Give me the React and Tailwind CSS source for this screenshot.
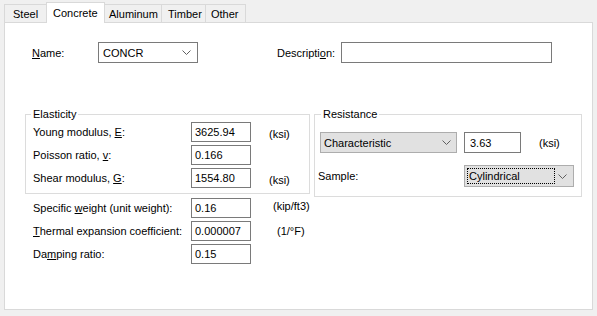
import React from "react";

const Chevron = () => (
  <svg width="9" height="5" viewBox="0 0 9 5" className="shrink-0">
    <path d="M0.5 0.5 L4.5 4.5 L8.5 0.5" fill="none" stroke="#606060" strokeWidth="1" />
  </svg>
);

const Input = ({ value, w = "w-[60px]" }) => (
  <div className={`${w} h-[20px] border border-[#7a7a7a] bg-white flex items-center pl-[3px] shrink-0`}>
    {value}
  </div>
);

const Row = ({ label, value, unit, className = "" }) => (
  <div className={`flex items-center h-[20px] ${className}`}>
    <div className="w-[158px] shrink-0 whitespace-nowrap">{label}</div>
    <Input value={value} />
    {unit}
  </div>
);

export default function App() {
  return (
    <div
      className="w-[597px] h-[316px] bg-[#f0f0f0] text-[11px] text-black leading-[14px] overflow-hidden whitespace-nowrap"
      style={{ fontFamily: '"Liberation Sans", Arial, sans-serif' }}
    >
      {/* tabs */}
      <div className="flex items-end h-[22px] pl-[4px]">
        <div className="h-[18px] w-[43px] border border-b-0 border-[#d9d9d9] flex items-center pl-[8px]">Steel</div>
        <div className="relative z-10 h-[21px] w-[59px] -mb-px border border-b-0 border-[#d9d9d9] bg-white flex items-start pt-[3px] pl-[6px] -ml-px">Concrete</div>
        <div className="h-[18px] w-[57px] border border-b-0 border-l-0 border-[#d9d9d9] flex items-center pl-[4px]">Aluminum</div>
        <div className="h-[18px] w-[44px] border border-b-0 border-l-0 border-[#d9d9d9] flex items-center pl-[6px]">Timber</div>
        <div className="h-[18px] w-[40px] border border-b-0 border-l-0 border-[#d9d9d9] flex items-center pl-[5px]">Other</div>
      </div>
      {/* panel */}
      <div className="ml-[4px] w-[589px] h-[288px] border border-[#d9d9d9] bg-white">
        <div className="flex items-center h-[21px] mt-[19px]">
          <div className="ml-[27px] w-[66px] shrink-0"><u>N</u>ame:</div>
          <div className="w-[100px] h-[21px] border border-[#7a7a7a] flex items-center justify-between pl-[4px] pr-[6px] shrink-0">
            <span>CONCR</span>
            <Chevron />
          </div>
          <div className="ml-[79px] w-[64px] shrink-0">Descripti<u>o</u>n:</div>
          <div className="w-[211px] h-[21px] border border-[#7a7a7a] shrink-0" />
        </div>

        <div className="flex items-start mt-[44px]">
          {/* left column */}
          <div className="ml-[20px] w-[285px] shrink-0">
            <fieldset className="w-[285px] h-[87px] border border-[#dcdcdc]">
              <legend className="ml-[5px] px-[2px] leading-[14px]">Elasticity</legend>
              <div className="pl-[7px] pt-[1px]">
                <Row label={<>Young modulus, <u>E</u>:</>} value="3625.94" unit={<span className="ml-[18px] mt-[3px]">(ksi)</span>} />
                <Row className="mt-[3px]" label={<>Poisson ratio, <u>v</u>:</>} value="0.166" />
                <Row className="mt-[3px]" label={<>Shear modulus, <u>G</u>:</>} value="1554.80" unit={<span className="ml-[18px] mt-[3px]">(ksi)</span>} />
              </div>
            </fieldset>
            <div className="pl-[8px] mt-[4px]">
              <Row label={<>Specific <u>w</u>eight (unit weight):</>} value="0.16" unit={<span className="ml-[22px] -mt-[4px]">(kip/ft3)</span>} />
              <Row className="mt-[3px]" label={<><u>T</u>hermal expansion coefficient:</>} value="0.000007" unit={<span className="ml-[26px] -mt-[1px]">(1/°F)</span>} />
              <Row className="mt-[3px]" label={<>Da<u>m</u>ping ratio:</>} value="0.15" />
            </div>
          </div>
          {/* right column */}
          <fieldset className="ml-[4px] w-[268px] h-[90px] border border-[#dcdcdc] shrink-0">
            <legend className="ml-[6px] px-[2px] leading-[14px]">Resistance</legend>
            <div className="flex items-center mt-[11px] pl-[5px]">
              <div className="w-[137px] h-[21px] bg-[#e1e1e1] border border-[#adadad] flex items-center justify-between pl-[3px] pr-[5px] shrink-0">
                <span>Characteristic</span>
                <Chevron />
              </div>
              <div className="ml-[7px] w-[57px] h-[21px] border border-[#7a7a7a] flex items-center pl-[5px] shrink-0">3.63</div>
              <span className="ml-[18px]">(ksi)</span>
            </div>
            <div className="flex items-center mt-[12px] pl-[3px]">
              <div className="w-[146px] shrink-0">Sample:</div>
              <div className="w-[110px] h-[22px] bg-[#e1e1e1] border border-[#adadad] flex items-center justify-between pl-[2px] pr-[6px] shrink-0">
                <span className="w-[88px] h-[16px] border border-dotted border-black flex items-center pl-[1px]">Cylindrical</span>
                <Chevron />
              </div>
            </div>
          </fieldset>
        </div>
      </div>
    </div>
  );
}
